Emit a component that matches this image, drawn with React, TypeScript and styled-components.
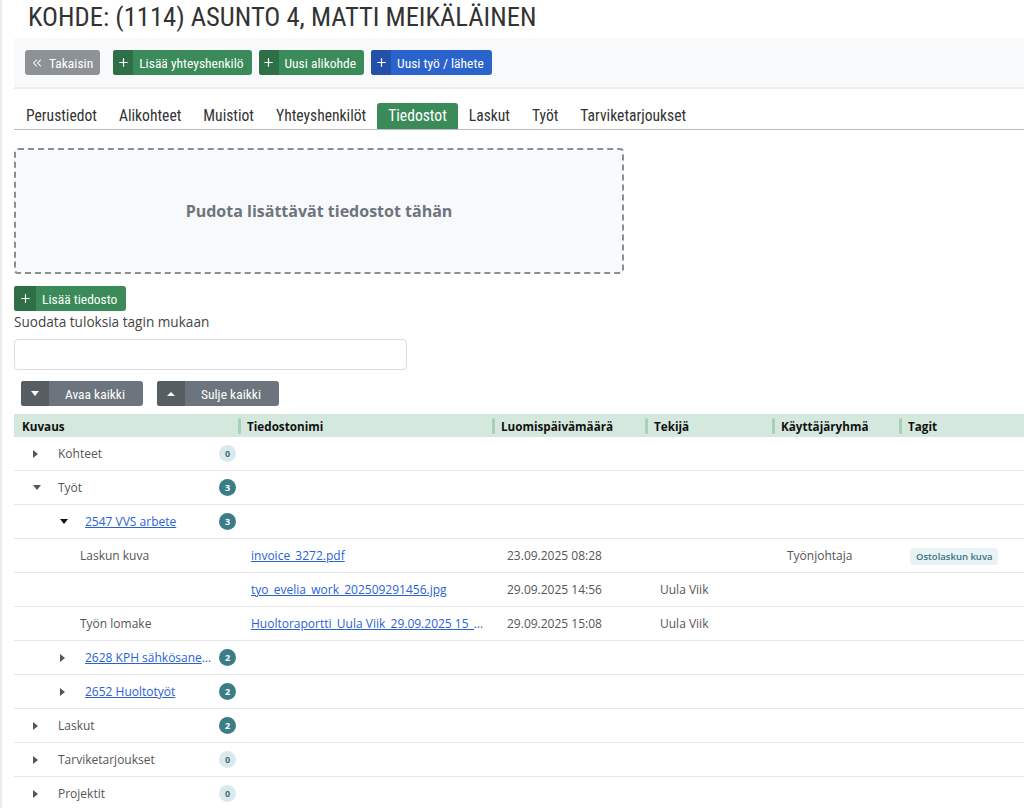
import React from "react";
import styled, { createGlobalStyle, css } from "styled-components";
import { ChevronsLeft, Plus } from "lucide-react";

const Global = createGlobalStyle`
  html, body { margin: 0; padding: 0; background: #fff; }
  body { font-family: "Open Sans", "Noto Sans", sans-serif; color: #444; font-size: 12px; }
  * { box-sizing: border-box; }
`;

const COND = `"Roboto Condensed", "Liberation Sans Narrow", "Roboto", sans-serif`;

const Page = styled.div`
  border-left: 2px solid #ececec;
  min-height: 808px;
  padding-left: 12px;
  overflow: hidden;
`;

const Title = styled.h1`
  margin: 0;
  padding: 1px 0 0 14px;
  height: 38px;
  font-family: ${COND};
  font-stretch: condensed;
  font-weight: 400;
  font-size: 26.6px;
  line-height: 32px;
  color: #333;
`;

const Toolbar = styled.div`
  display: flex;
  align-items: center;
  gap: 7px;
  height: 51px;
  padding: 0 11px;
  background: #f8f9fa;
  border-bottom: 2px solid #eceef0;
`;

const palette = {
  green: ["#3b8a59", "#2f6f47"],
  blue: ["#2b63cc", "#2350a8"],
  gray: ["#8d9297", "#7d8287"],
  dark: ["#6c757d", "#565e64"],
};

type Tone = keyof typeof palette;

const Btn = styled.button<{ $tone: Tone; $w?: number; $mr?: number }>`
  display: inline-flex;
  align-items: stretch;
  height: 25px;
  padding: 0;
  border: 0;
  border-radius: 3px;
  overflow: hidden;
  background: ${(p) => palette[p.$tone][0]};
  color: #fff;
  font-family: ${COND};
  font-stretch: condensed;
  font-size: 13.5px;
  cursor: pointer;
  ${(p) => p.$w && css`width: ${p.$w}px;`}
  ${(p) => p.$mr && css`margin-right: ${p.$mr}px;`}
`;

const BtnIcon = styled.span<{ $tone: Tone; $w?: number }>`
  display: flex;
  align-items: center;
  justify-content: center;
  width: ${(p) => p.$w ?? 20}px;
  background: ${(p) => palette[p.$tone][1]};
`;

const BtnLabel = styled.span<{ $center?: boolean; $pad?: string }>`
  display: flex;
  align-items: center;
  padding: ${(p) => p.$pad ?? "0 8px 0 6px"};
  white-space: nowrap;
  ${(p) => p.$center && css`flex: 1; justify-content: center;`}
`;

const BackMark = styled(ChevronsLeft)`
  margin-right: 5px;
`;

const Tabs = styled.div`
  display: flex;
  align-items: flex-end;
  margin-top: 14px;
  height: 27px;
  border-bottom: 1px solid #bdbdbd;
  padding-left: 1px;
`;

const Tab = styled.div<{ $active?: boolean }>`
  height: 26px;
  display: flex;
  align-items: center;
  padding: 0 11px;
  font-family: ${COND};
  font-stretch: condensed;
  font-size: 15.6px;
  color: #333;
  border-radius: 3px 3px 0 0;
  ${(p) =>
    p.$active &&
    css`
      background: #3b8a59;
      color: #fff;
    `}
`;

const Drop = styled.div`
  margin-top: 18px;
  width: 610px;
  height: 126px;
  border: 2px dashed #8a8f94;
  border-radius: 4px;
  background: #f8f9fb;
  display: flex;
  align-items: center;
  justify-content: center;
  font-weight: 700;
  font-size: 16px;
  color: #6c757d;
`;

const AddFile = styled.div`
  margin-top: 12px;
`;

const Label = styled.div`
  margin-top: 1px;
  font-size: 13.6px;
  color: #444;
  line-height: 20px;
`;

const Input = styled.input`
  display: block;
  margin-top: 7px;
  width: 393px;
  height: 31px;
  border: 1px solid #dcdcdc;
  border-radius: 4px;
`;

const ToggleRow = styled.div`
  display: flex;
  gap: 14px;
  margin-top: 11px;
  padding-left: 7px;
`;

const Caret = styled.span<{ $dir: "down" | "right" | "up"; $c?: string }>`
  display: inline-block;
  width: 0;
  height: 0;
  ${(p) =>
    p.$dir === "right"
      ? css`
          border-top: 4px solid transparent;
          border-bottom: 4px solid transparent;
          border-left: 5px solid ${p.$c ?? "#555"};
        `
      : p.$dir === "down"
      ? css`
          border-left: 4.5px solid transparent;
          border-right: 4.5px solid transparent;
          border-top: 5px solid ${p.$c ?? "#555"};
        `
      : css`
          border-left: 4px solid transparent;
          border-right: 4px solid transparent;
          border-bottom: 4px solid ${p.$c ?? "#fff"};
        `}
`;

const COLS = "224px 254px 153px 127px 127px 1fr";

const Table = styled.div`
  margin-top: 8px;
  width: 1010px;
`;

const Head = styled.div`
  display: grid;
  grid-template-columns: ${COLS};
  height: 23px;
  background: #d5e8dd;
  align-items: center;
`;

const HeadCell = styled.div<{ $first?: boolean }>`
  position: relative;
  font-weight: 700;
  font-size: 11.7px;
  color: #111;
  padding-left: ${(p) => (p.$first ? 8 : 9)}px;
  ${(p) =>
    !p.$first &&
    css`
      &::before {
        content: "";
        position: absolute;
        left: 0;
        top: 50%;
        margin-top: -8px;
        width: 3px;
        height: 16px;
        border-radius: 2px;
        background: #a9cfb6;
      }
    `}
`;

const Row = styled.div`
  display: grid;
  grid-template-columns: ${COLS};
  height: 34px;
  align-items: center;
  border-bottom: 1px solid #e6e6e6;
`;

const TreeCell = styled.div<{ $pad: number }>`
  display: flex;
  align-items: center;
  padding-left: ${(p) => p.$pad}px;
  padding-right: 2px;
  min-width: 0;
`;

const CaretBox = styled.span`
  width: 25px;
  flex: none;
  display: flex;
  align-items: center;
`;

const TreeText = styled.span<{ $link?: boolean }>`
  flex: 1;
  min-width: 0;
  overflow: hidden;
  text-overflow: ellipsis;
  white-space: nowrap;
  color: ${(p) => (p.$link ? "#2a62d4" : "#555")};
  text-decoration: ${(p) => (p.$link ? "underline" : "none")};
`;

const Badge = styled.span<{ $zero?: boolean }>`
  flex: none;
  width: 17px;
  height: 17px;
  border-radius: 50%;
  display: flex;
  align-items: center;
  justify-content: center;
  font-size: 9px;
  font-weight: 700;
  background: ${(p) => (p.$zero ? "#dae9ee" : "#3a7d86")};
  color: ${(p) => (p.$zero ? "#3a6f78" : "#fff")};
  margin-left: 6px;
`;

const Cell = styled.div<{ $link?: boolean; $pad?: number }>`
  padding-left: ${(p) => p.$pad ?? 13}px;
  padding-right: 8px;
  white-space: nowrap;
  overflow: hidden;
  text-overflow: ellipsis;
  min-width: 0;
  color: ${(p) => (p.$link ? "#2a62d4" : "#555")};
  text-decoration: ${(p) => (p.$link ? "underline" : "none")};
`;

const TagCell = styled.div`
  padding-left: 11px;
`;

const Tag = styled.span`
  display: inline-block;
  padding: 2px 6px;
  background: #e8f3f6;
  color: #3a7480;
  border-radius: 4px;
  font-size: 9.5px;
  font-weight: 600;
`;

type TreeRow = {
  level: 0 | 1;
  label: string;
  open?: boolean;
  link?: boolean;
  count: number;
};

const TreeLine = ({ r }: { r: TreeRow }) => (
  <Row>
    <TreeCell $pad={r.level === 0 ? 19 : 46}>
      <CaretBox>
        <Caret $dir={r.open ? "down" : "right"} $c={r.level === 1 && r.open ? "#111" : "#555"} />
      </CaretBox>
      <TreeText $link={r.link}>{r.label}</TreeText>
      <Badge $zero={r.count === 0}>{r.count}</Badge>
    </TreeCell>
    <div />
    <div />
    <div />
    <div />
    <div />
  </Row>
);

type FileRow = { desc: string; file: string; date: string; by: string; group: string; tag?: string };

const FileLine = ({ f }: { f: FileRow }) => (
  <Row>
    <TreeCell $pad={66}>
      <TreeText>{f.desc}</TreeText>
    </TreeCell>
    <Cell $link>{f.file}</Cell>
    <Cell $pad={15}>{f.date}</Cell>
    <Cell $pad={15}>{f.by}</Cell>
    <Cell $pad={15}>{f.group}</Cell>
    <TagCell>{f.tag && <Tag>{f.tag}</Tag>}</TagCell>
  </Row>
);

const files: FileRow[] = [
  { desc: "Laskun kuva", file: "invoice_3272.pdf", date: "23.09.2025 08:28", by: "", group: "Työnjohtaja", tag: "Ostolaskun kuva" },
  { desc: "", file: "tyo_evelia_work_202509291456.jpg", date: "29.09.2025 14:56", by: "Uula Viik", group: "" },
  { desc: "Työn lomake", file: "Huoltoraportti_Uula Viik_29.09.2025 15_08.pdf", date: "29.09.2025 15:08", by: "Uula Viik", group: "" },
];

const tabs = ["Perustiedot", "Alikohteet", "Muistiot", "Yhteyshenkilöt", "Tiedostot", "Laskut", "Työt", "Tarviketarjoukset"];

const PlusIcon = () => <Plus size={13} strokeWidth={2.2} />;

export default function App() {
  return (
    <>
      <Global />
      <Page>
        <Title>KOHDE: (1114) ASUNTO 4, MATTI MEIKÄLÄINEN</Title>
        <Toolbar>
          <Btn $tone="gray" $mr={6}>
            <BtnLabel $pad="0 7px 0 5px">
              <BackMark size={14} strokeWidth={1.8} />
              Takaisin
            </BtnLabel>
          </Btn>
          <Btn $tone="green">
            <BtnIcon $tone="green">
              <PlusIcon />
            </BtnIcon>
            <BtnLabel>Lisää yhteyshenkilö</BtnLabel>
          </Btn>
          <Btn $tone="green">
            <BtnIcon $tone="green">
              <PlusIcon />
            </BtnIcon>
            <BtnLabel>Uusi alikohde</BtnLabel>
          </Btn>
          <Btn $tone="blue">
            <BtnIcon $tone="blue">
              <PlusIcon />
            </BtnIcon>
            <BtnLabel>Uusi työ / lähete</BtnLabel>
          </Btn>
        </Toolbar>
        <Tabs>
          {tabs.map((t) => (
            <Tab key={t} $active={t === "Tiedostot"}>
              {t}
            </Tab>
          ))}
        </Tabs>
        <Drop>Pudota lisättävät tiedostot tähän</Drop>
        <AddFile>
          <Btn $tone="green">
            <BtnIcon $tone="green" $w={22}>
              <PlusIcon />
            </BtnIcon>
            <BtnLabel $pad="0 9px 0 6px">Lisää tiedosto</BtnLabel>
          </Btn>
        </AddFile>
        <Label>Suodata tuloksia tagin mukaan</Label>
        <Input />
        <ToggleRow>
          <Btn $tone="dark" $w={122}>
            <BtnIcon $tone="dark" $w={28}>
              <Caret $dir="down" $c="#fff" />
            </BtnIcon>
            <BtnLabel $center>Avaa kaikki</BtnLabel>
          </Btn>
          <Btn $tone="dark" $w={122}>
            <BtnIcon $tone="dark" $w={28}>
              <Caret $dir="up" $c="#fff" />
            </BtnIcon>
            <BtnLabel $center>Sulje kaikki</BtnLabel>
          </Btn>
        </ToggleRow>
        <Table>
          <Head>
            <HeadCell $first>Kuvaus</HeadCell>
            <HeadCell>Tiedostonimi</HeadCell>
            <HeadCell>Luomispäivämäärä</HeadCell>
            <HeadCell>Tekijä</HeadCell>
            <HeadCell>Käyttäjäryhmä</HeadCell>
            <HeadCell>Tagit</HeadCell>
          </Head>
          <TreeLine r={{ level: 0, label: "Kohteet", count: 0 }} />
          <TreeLine r={{ level: 0, label: "Työt", count: 3, open: true }} />
          <TreeLine r={{ level: 1, label: "2547 VVS arbete", count: 3, open: true, link: true }} />
          {files.map((f, i) => (
            <FileLine key={i} f={f} />
          ))}
          <TreeLine r={{ level: 1, label: "2628 KPH sähkösaneeraus", count: 2, link: true }} />
          <TreeLine r={{ level: 1, label: "2652 Huoltotyöt", count: 2, link: true }} />
          <TreeLine r={{ level: 0, label: "Laskut", count: 2 }} />
          <TreeLine r={{ level: 0, label: "Tarviketarjoukset", count: 0 }} />
          <TreeLine r={{ level: 0, label: "Projektit", count: 0 }} />
        </Table>
      </Page>
    </>
  );
}
